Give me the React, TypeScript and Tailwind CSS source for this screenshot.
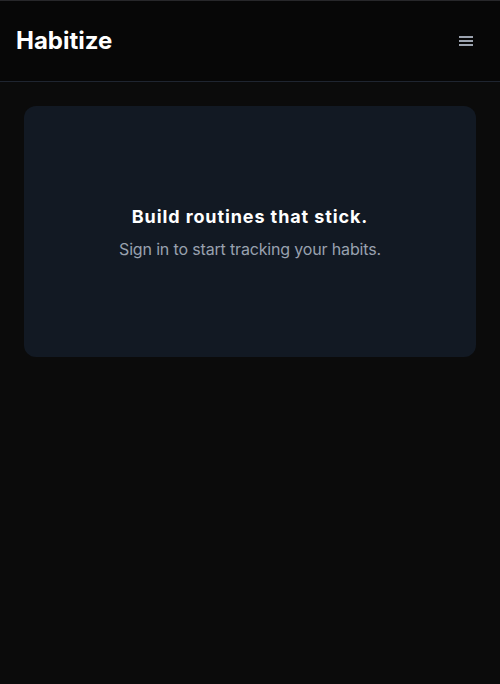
import React from "react";

function MenuIcon() {
  return (
    <svg width="16" height="16" viewBox="0 0 16 16" fill="none" aria-hidden="true">
      <rect x="1" y="3" width="14" height="2" fill="#9ca3af" />
      <rect x="1" y="7" width="14" height="2" fill="#9ca3af" />
      <rect x="1" y="11" width="14" height="2" fill="#9ca3af" />
    </svg>
  );
}

export default function App() {
  return (
    <div
      className="min-h-[684px] bg-[#0b0b0b] text-white"
      style={{ fontFamily: "Inter, 'Noto Sans', sans-serif" }}
    >
      <header className="flex h-[82px] items-center justify-between border-t border-b border-t-[#27272a] border-b-[#1f2530] bg-[#070707] px-4">
        <h1 className="text-[24px] font-bold">Habitize</h1>
        <button className="mr-0.5 flex h-8 w-8 items-center justify-center" aria-label="Menu">
          <MenuIcon />
        </button>
      </header>

      <main className="p-6">
        <section className="flex h-[251px] flex-col items-center justify-center rounded-xl bg-[#121923] text-center">
          <h2 className="text-lg font-bold tracking-[0.05em] text-white">Build routines that stick.</h2>
          <p className="mt-1.5 text-base tracking-[-0.01em] text-gray-400">Sign in to start tracking your habits.</p>
        </section>
      </main>
    </div>
  );
}
